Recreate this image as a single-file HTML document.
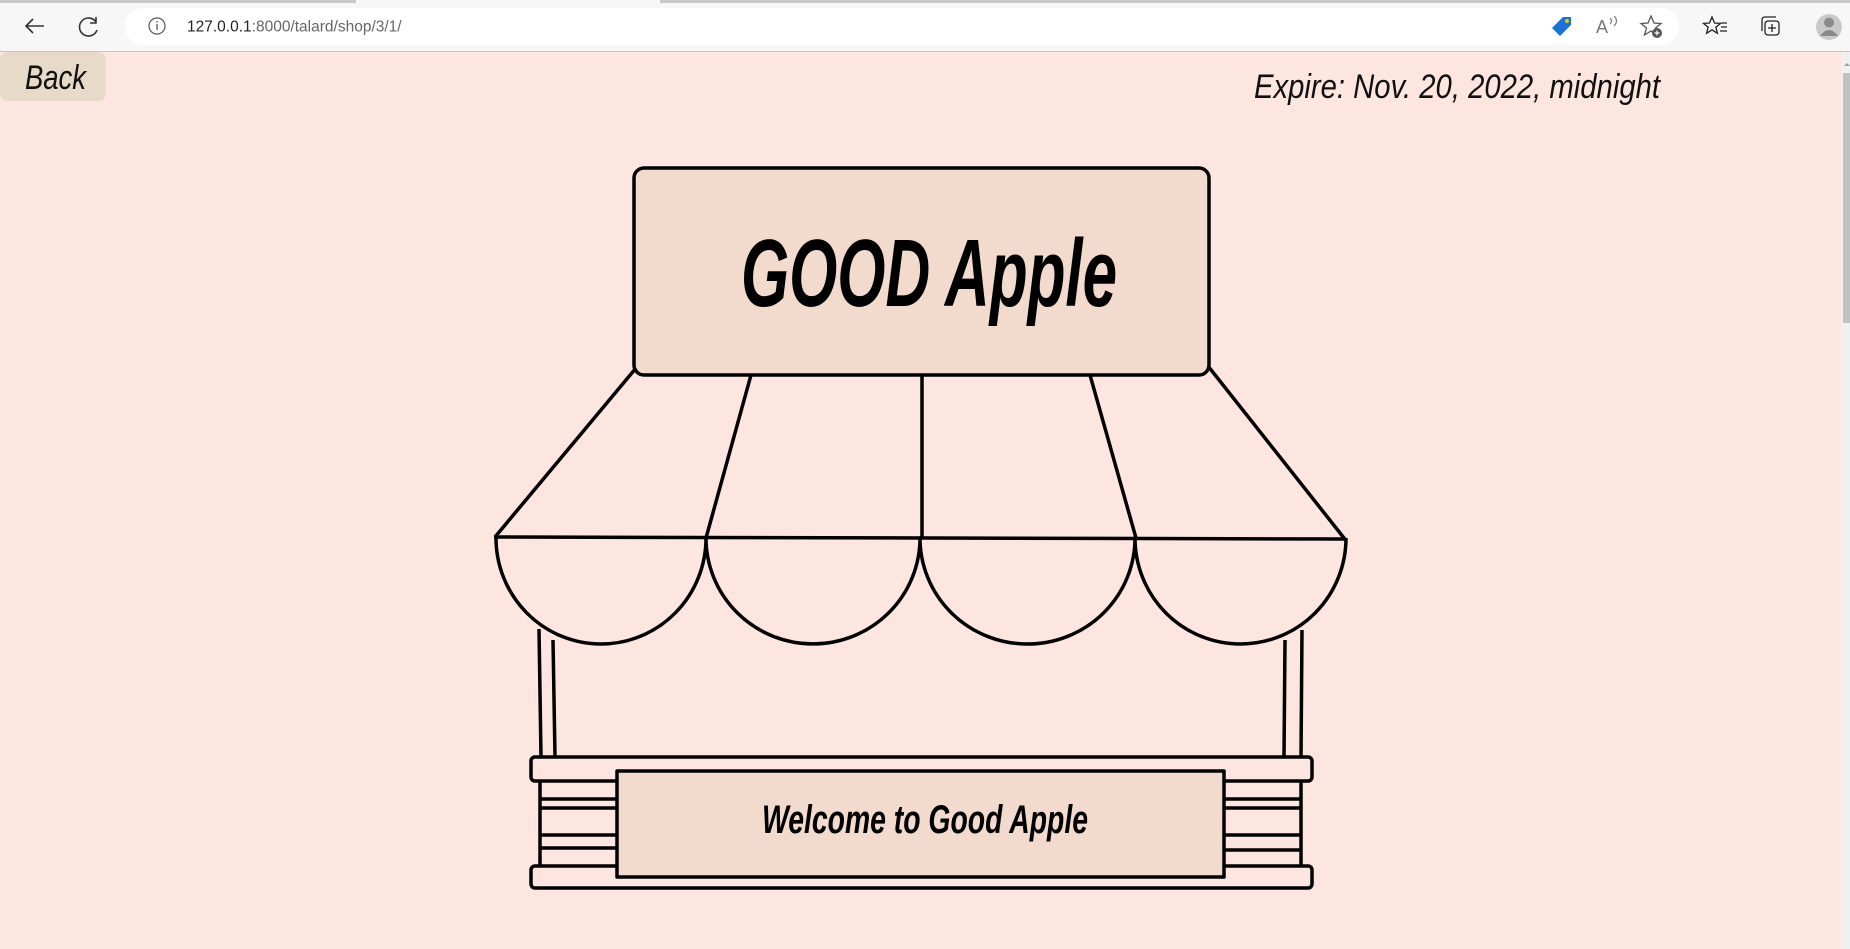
<!DOCTYPE html>
<html><head><meta charset="utf-8"><style>
html,body{margin:0;padding:0;width:1850px;height:949px;overflow:hidden;background:#fde6e0;font-family:"Liberation Sans",sans-serif}
svg{position:absolute;left:0;top:0}
</style></head><body>
<svg width="1850" height="949" viewBox="0 0 1850 949" xmlns="http://www.w3.org/2000/svg">
<rect x="0" y="0" width="1850" height="52" fill="#f7f7f7"/>
<rect x="0" y="0" width="356" height="3" fill="#c8c8c8"/>
<rect x="660" y="0" width="1190" height="3" fill="#c8c8c8"/>
<rect x="0" y="51" width="1850" height="1" fill="#c4c4c4"/>
<rect x="125" y="8" width="1554" height="37" rx="18.5" fill="#ffffff"/>
<path d="M44 26 H26 M33 19 L26 26 L33 33" stroke="#333" stroke-width="1.6" fill="none"/>
<path d="M96 22 A9 9 0 1 0 97 30 M96 17 V23 H90" stroke="#333" stroke-width="1.6" fill="none"/>
<circle cx="157" cy="26" r="8" stroke="#555" stroke-width="1.2" fill="none"/>
<rect x="156.4" y="24" width="1.3" height="6" fill="#555"/><rect x="156.4" y="21" width="1.3" height="1.5" fill="#555"/>
<text x="187" y="31.5" font-size="15.5" fill="#222">127.0.0.1<tspan fill="#666">:8000/talard/shop/3/1/</tspan></text>
<path d="M1552 28 L1563 17 L1571 17 L1571 25 L1560 36 Z" fill="#1a73d6"/><circle cx="1567" cy="21" r="2" fill="#f5c400"/>
<text x="1596" y="33" font-size="18" fill="#777">A</text><path d="M1610 18 q3 3 0 6 M1614 16 q5 5 0 10" stroke="#777" stroke-width="1.2" fill="none"/>
<path d="M1651 16 l3 7 7 .5 -5.5 4.5 2 7 -6.5 -4 -6.5 4 2 -7 -5.5 -4.5 7 -.5z" stroke="#555" stroke-width="1.3" fill="none"/>
<circle cx="1657" cy="33" r="5" fill="#555"/><path d="M1657 30.5v5M1654.5 33h5" stroke="#fff" stroke-width="1.2"/>
<path d="M1712 17 l2.5 6 6 .4 -4.6 3.8 1.5 6 -5.4 -3.3 -5.4 3.3 1.5 -6 -4.6 -3.8 6 -.4z" stroke="#222" stroke-width="1.3" fill="none"/>
<path d="M1721 23h6M1721 27h6M1720 31h7" stroke="#222" stroke-width="1.3"/>
<rect x="1765" y="21" width="14" height="14" rx="3" stroke="#222" stroke-width="1.3" fill="none"/>
<path d="M1762 31 V20 q0-3 3-3 H1776" stroke="#222" stroke-width="1.3" fill="none"/>
<path d="M1772 24v8M1768 28h8" stroke="#222" stroke-width="1.3"/>
<circle cx="1829" cy="27" r="13" fill="#c9c9c9"/><circle cx="1829" cy="22.5" r="5" fill="#8a8a8a"/><path d="M1820 36 q9 -12 18 0 Z" fill="#8a8a8a"/>
<rect x="1841" y="52" width="9" height="897" fill="#f0f0f0"/>
<rect x="1843" y="73" width="7" height="250" fill="#c1c1c1"/>
<path d="M1844 66 l3 -3 l3 3z" fill="#a0a0a0"/>
<rect x="0" y="52" width="106" height="49" rx="8" fill="#e7dac8"/>
<text x="25" y="89" font-size="34" font-style="italic" fill="#111" textLength="61" lengthAdjust="spacingAndGlyphs">Back</text>
<text x="1254" y="98" font-size="34" font-style="italic" fill="#111" textLength="406" lengthAdjust="spacingAndGlyphs">Expire: Nov. 20, 2022, midnight</text>
<g stroke="#000" stroke-width="3.5" fill="none" stroke-linejoin="round">
<rect x="634" y="168" width="575" height="207" rx="10" fill="#f2dbcd"/>
<path d="M636 368 L495 537 M751 375 L706 538 M922 375 L922 538 M1090 375 L1136 538 M1208 366 L1344 538"/>
<path d="M494 537 L1346 539"/>
<path d="M496 538 A105 106 0 0 0 706 538 A107 106 0 0 0 920 538 A107.5 106 0 0 0 1135 538 A105.5 106 0 0 0 1346 538"/>
<path d="M539 629 L541 757 M553 640 L555 757 M1285 640 L1284 757 M1302 630 L1301 757"/>
<rect x="531" y="757" width="781" height="24" rx="4" fill="#fde6e0"/>
<path d="M540 781 V866 M1301 781 V866"/>
<path d="M540 799 H617 M540 808 H617 M540 835 H617 M540 848 H617 M1224 799 H1301 M1224 808 H1301 M1224 835 H1301 M1224 850 H1301"/>
<rect x="531" y="866" width="781" height="22" rx="4" fill="#fde6e0"/>
<rect x="617" y="771" width="607" height="106" fill="#f2dbcd"/>
</g>
<text x="741" y="306" font-size="96" font-style="italic" font-weight="bold" fill="#000" textLength="376" lengthAdjust="spacingAndGlyphs">GOOD Apple</text>
<text x="762" y="833" font-size="40" font-style="italic" font-weight="bold" fill="#000" textLength="326" lengthAdjust="spacingAndGlyphs">Welcome to Good Apple</text>
</svg>
</body></html>
